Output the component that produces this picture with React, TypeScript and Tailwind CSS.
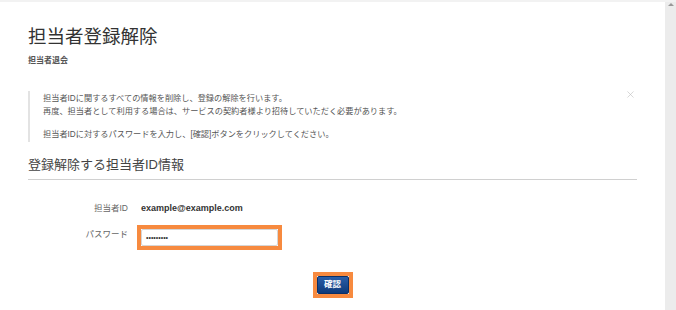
import { X } from "lucide-react";

const font = { fontFamily: '"Liberation Sans", "Noto Sans CJK JP", sans-serif' };

export default function App() {
  return (
    <div className="h-[310px] w-[676px] overflow-hidden bg-white text-[#333]" style={font}>
      <div className="h-[2px] bg-[#f2f2f2]" />
      <div className="flex h-[308px]">
        <main className="flex-1 px-[28px]">
          <h1 className="mt-[23px] text-[18.5px] leading-[24px] font-normal text-[#333]">担当者登録解除</h1>
          <div className="mt-[7px] text-[8px] leading-[10px] font-bold text-[#555]">担当者退会</div>

          <div className="relative mt-[25px] border-l-2 border-[#e3e3e3] py-[1px] pl-[13px] text-[8.2px] leading-[13px] text-[#555]">
            <p>担当者IDに関するすべての情報を削除し、登録の解除を行います。</p>
            <p>再度、担当者として利用する場合は、サービスの契約者様より招待していただく必要があります。</p>
            <p className="mt-[10px]">担当者IDに対するパスワードを入力し、[確認]ボタンをクリックしてください。</p>
            <button type="button" className="absolute right-[1px] top-[-2px] text-[#bdbdbd]">
              <X size={11} strokeWidth={1.3} />
            </button>
          </div>

          <div className="mt-[14px] border-b border-[#d0d0d0] pb-[5px] text-[13px] leading-[18px] text-[#444]">
            登録解除する担当者ID情報
          </div>

          <div className="mt-[22px] grid grid-cols-[100px_1fr] items-center gap-x-[13px] gap-y-[9px] text-[8.5px]">
            <div className="text-right text-[#666]">担当者ID</div>
            <div className="text-[9px] font-bold text-[#333]">example@example.com</div>
            <div className="self-start pt-[3px] text-right text-[#666]">パスワード</div>
            <div className="-ml-[4px] w-[145px] border-[4px] border-[#f78a3f]">
              <div className="flex h-[17px] items-center rounded-[2px] border border-[#d6d6d6] bg-white px-[4px] text-[7px] leading-none text-[#333]">
                •••••••••
              </div>
            </div>
          </div>

          <div className="mt-[22px] flex justify-center">
            <div className="border-[4px] border-[#f78a3f]">
              <button
                type="button"
                className="flex h-[18px] w-[32px] items-center justify-center rounded-[2px] border border-[#0b2f66] bg-gradient-to-b from-[#2a5ea8] to-[#0d3a7a] text-[8.5px] font-bold text-white"
              >
                確認
              </button>
            </div>
          </div>
        </main>
        <div className="relative w-[11px] bg-[#ececec]">
          <div className="absolute left-[3px] top-[1px] h-0 w-0 border-x-[3px] border-b-[3px] border-x-transparent border-b-[#999]" />
        </div>
      </div>
    </div>
  );
}
